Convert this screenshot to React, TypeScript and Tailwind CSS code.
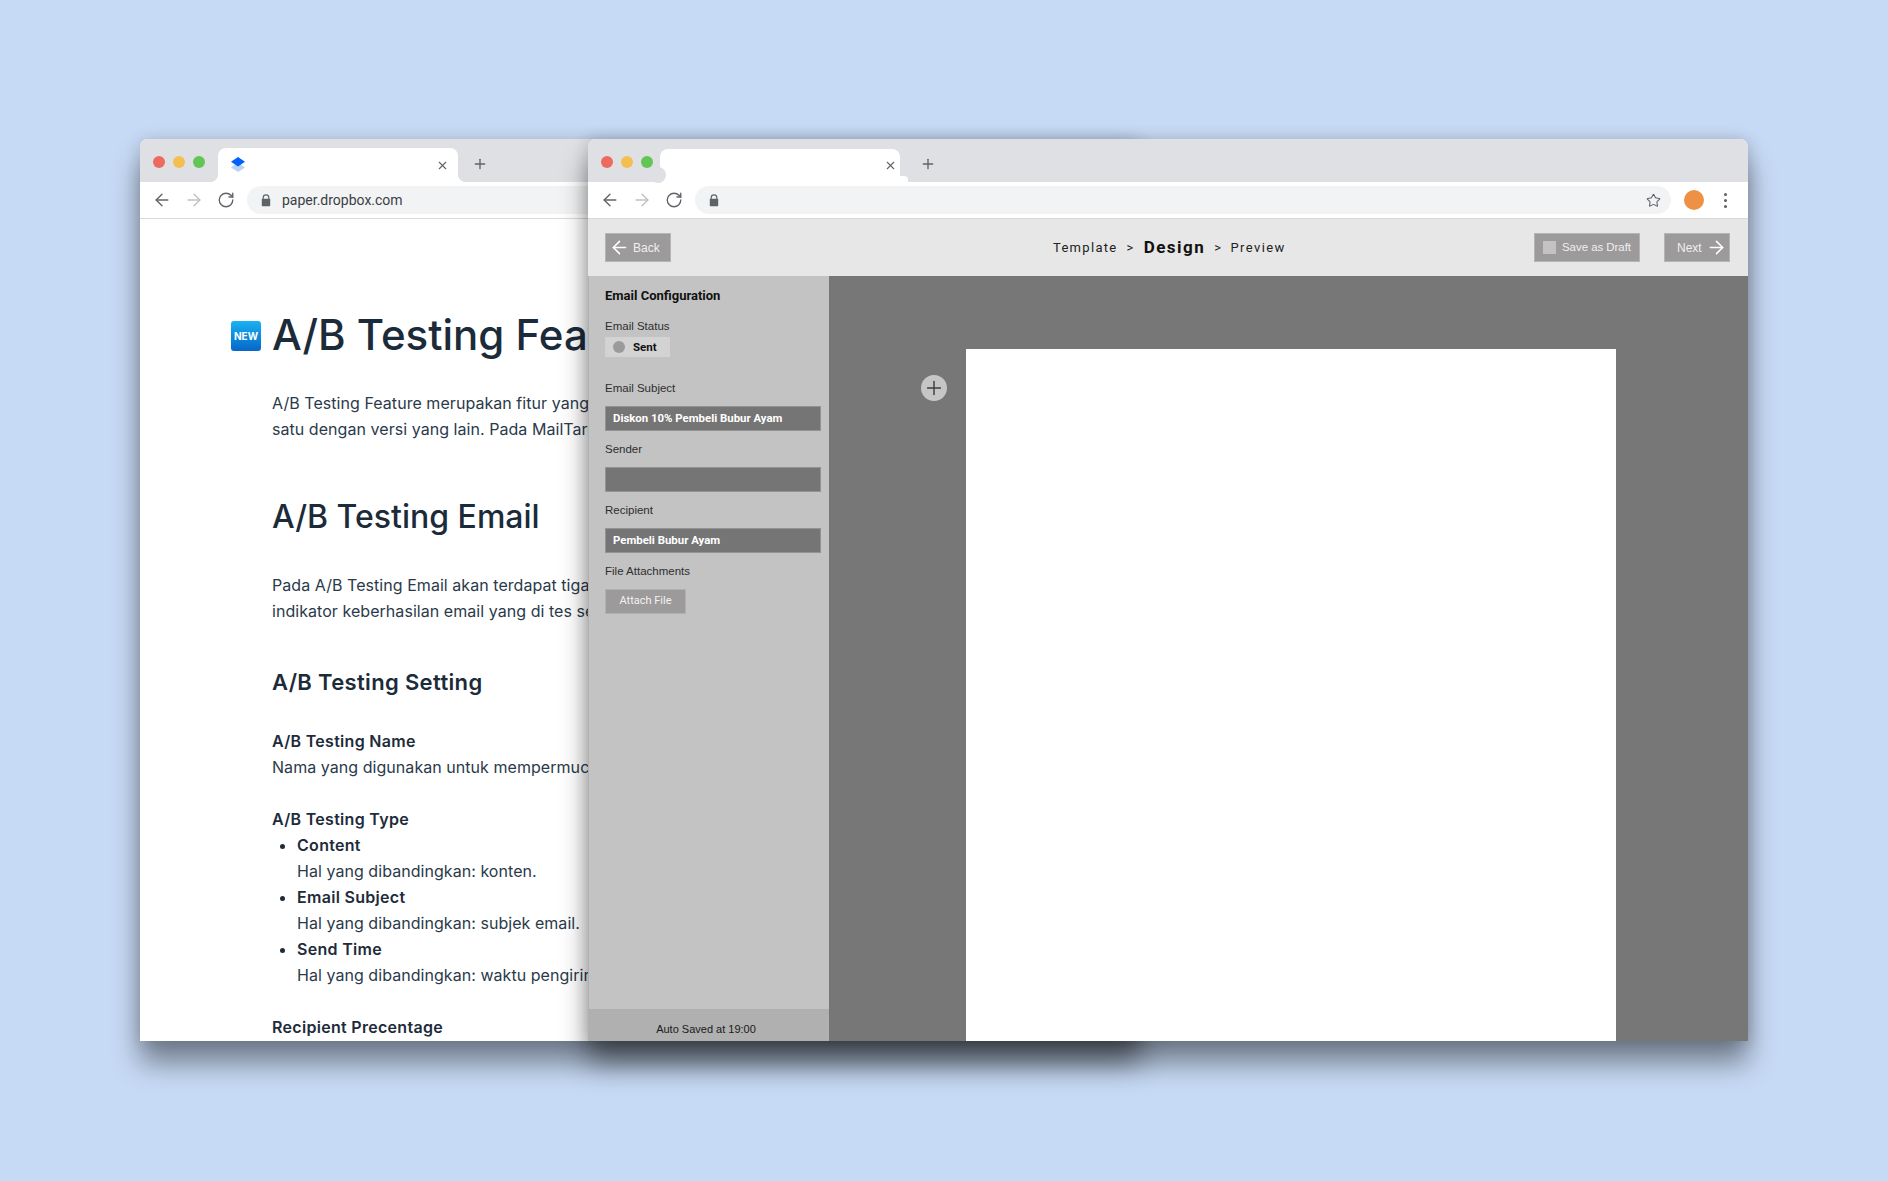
import React from "react";
import { ArrowLeft, ArrowRight, RotateCw, Star, X, Plus } from "lucide-react";

function Lights() {
  return (
    <div className="flex gap-2 pt-[17px] pl-[13px] w-[78px] shrink-0">
      <span className="w-3 h-3 rounded-full bg-[#ed6a5e]" />
      <span className="w-3 h-3 rounded-full bg-[#f5bf4f]" />
      <span className="w-3 h-3 rounded-full bg-[#62c554]" />
    </div>
  );
}

function LockIcon() {
  return (
    <svg width="10" height="13" viewBox="0 0 10 13" className="shrink-0">
      <path d="M2.2 5V3.6a2.8 2.8 0 0 1 5.6 0V5" fill="none" stroke="#5f6368" strokeWidth="1.2" />
      <rect x="0.8" y="4.8" width="8.4" height="7.4" rx="0.8" fill="#5f6368" />
    </svg>
  );
}

function NavButtons() {
  return (
    <div className="flex items-center gap-[12px] pl-[12px] shrink-0">
      <ArrowLeft size={20} strokeWidth={1.6} className="text-[#5f6368]" />
      <ArrowRight size={20} strokeWidth={1.6} className="text-[#bdc1c6]" />
      <RotateCw size={18} strokeWidth={1.8} className="text-[#5f6368] ml-[1px]" />
    </div>
  );
}

function Field({ label, value }: { label: string; value?: string }) {
  return (
    <div className="mt-[12px] first:mt-0">
      <div className="text-[11.5px] leading-[13px] text-[#2e2e2e] font-['Liberation_Sans',sans-serif]">{label}</div>
      <div className="mt-[11px] h-[25px] w-[216px] bg-[#757575] border border-[#939393] flex items-center pl-[7px] text-[11.4px] font-bold text-white font-['Roboto',sans-serif]">
        {value}
      </div>
    </div>
  );
}

const ROW = "text-[16px] leading-[26px] tracking-[0.05px] text-[#2b3a4a]";
const BOLD = "text-[16px] leading-[26px] tracking-[0.3px] font-semibold text-[#1e2b3a]";

function LeftWindow() {
  return (
    <div className="absolute left-[140px] top-[139px] w-[1000px] h-[902px] rounded-t-[8px] overflow-hidden flex flex-col bg-white shadow-[0_22px_28px_rgba(0,0,0,0.42),0_0_16px_rgba(0,0,0,0.14)] z-0">
      <div className="h-[43px] bg-[#dfe0e4] flex shrink-0">
        <Lights />
        <div className="relative mt-[9px] w-[240px] h-[34px] bg-white rounded-t-[8px] flex items-center pl-[13px] pr-[9px] justify-between">
          <span className="absolute left-[-8px] bottom-0 w-2 h-2 bg-[radial-gradient(circle_at_0_0,transparent_8px,#fff_8px)]" />
          <span className="absolute right-[-8px] bottom-0 w-2 h-2 bg-[radial-gradient(circle_at_100%_0,transparent_8px,#fff_8px)]" />
          <svg width="14" height="15" viewBox="0 0 14 15" className="-mt-[2px]">
            <path d="M7 5.5 14 10.5 7 15 0 10.5Z" fill="#b9d3f3" />
            <path d="M7 0 14 4.7 7 9.4 0 4.7Z" fill="#0061fe" />
          </svg>
          <X size={13} strokeWidth={2} className="text-[#5f6368]" />
        </div>
        <Plus size={16} strokeWidth={2} className="text-[#5f6368] ml-[14px] mt-[17px]" />
      </div>
      <div className="h-[37px] border-b border-[#d9d9d9] flex items-center shrink-0">
        <NavButtons />
        <div className="ml-[12px] flex-1 h-[28px] rounded-l-full bg-[#f1f3f4] flex items-center pl-[14px] gap-[11px]">
          <LockIcon />
          <span className="text-[14px] text-[#3c4043] font-['Roboto',sans-serif]">paper.dropbox.com</span>
        </div>
      </div>
      <div className="flex-1 overflow-hidden pl-[132px] font-['Inter',sans-serif] whitespace-nowrap">
        <div className="mt-[91px] flex items-center relative">
          <div className="absolute left-[-41px] top-[11px] w-[30px] h-[30px] rounded-[3px] bg-gradient-to-b from-[#1bb2f2] to-[#0a66c8] flex items-center justify-center text-[10px] font-bold text-white">NEW</div>
          <h1 className="text-[42px] leading-[50px] font-medium text-[#1c2b3a]">A/B Testing Feat</h1>
        </div>
        <p className={`mt-[30px] ${ROW}`}>A/B Testing Feature merupakan fitur yang</p>
        <p className={ROW}>satu dengan versi yang lain. Pada MailTarg</p>
        <h2 className="mt-[55px] text-[32px] leading-[40px] font-medium text-[#1c2b3a]">A/B Testing Email</h2>
        <p className={`mt-[35px] ${ROW}`}>Pada A/B Testing Email akan terdapat tiga</p>
        <p className={ROW}>indikator keberhasilan email yang di tes se</p>
        <h3 className="mt-[43px] text-[22px] leading-[30px] tracking-[0.34px] font-semibold text-[#1c2b3a]">A/B Testing Setting</h3>
        <p className={`mt-[31px] ${BOLD}`}>A/B Testing Name</p>
        <p className={ROW}>Nama yang digunakan untuk mempermuc</p>
        <p className={`mt-[26px] ${BOLD}`}>A/B Testing Type</p>
        <ul className="list-disc pl-[25px]">
          <li className={BOLD}>Content</li>
          <p className={ROW}>Hal yang dibandingkan: konten.</p>
          <li className={BOLD}>Email Subject</li>
          <p className={ROW}>Hal yang dibandingkan: subjek email.</p>
          <li className={BOLD}>Send Time</li>
          <p className={ROW}>Hal yang dibandingkan: waktu pengirir</p>
        </ul>
        <p className={`mt-[26px] ${BOLD}`}>Recipient Precentage</p>
      </div>
    </div>
  );
}

function FrontWindow() {
  return (
    <div className="absolute left-[588px] top-[139px] w-[1160px] h-[902px] rounded-t-[8px] overflow-hidden flex flex-col bg-white shadow-[0_22px_28px_rgba(0,0,0,0.42),0_0_16px_rgba(0,0,0,0.18)] z-10">
      <div className="h-[43px] bg-[#dfe0e4] flex shrink-0">
        <Lights />
        <div className="relative mt-[10px] -ml-[6px] w-[240px] h-[33px] bg-white rounded-t-[8px] flex items-center justify-end pr-[3px]">
          <span className="absolute left-[-10px] bottom-[-1px] w-4 h-4 rounded-full bg-[#dfe0e4]" />
          <span className="absolute right-[-8px] bottom-0 w-2 h-[6px] rounded-tr-[4px] bg-white" />
          <X size={13} strokeWidth={2} className="text-[#5f6368] -mt-[1px]" />
        </div>
        <Plus size={16} strokeWidth={2} className="text-[#5f6368] ml-[20px] mt-[17px]" />
      </div>
      <div className="h-[37px] border-b border-[#d9d9d9] flex items-center shrink-0">
        <NavButtons />
        <div className="ml-[12px] w-[976px] h-[28px] rounded-full bg-[#f1f3f4] flex items-center justify-between pl-[14px] pr-[10px]">
          <LockIcon />
          <Star size={15} strokeWidth={1.7} className="text-[#5f6368]" />
        </div>
        <span className="ml-[13px] w-5 h-5 rounded-full bg-[#ee9144]" />
        <div className="ml-[20px] flex flex-col gap-[3px]">
          <span className="w-[3px] h-[3px] rounded-full bg-[#5f6368]" />
          <span className="w-[3px] h-[3px] rounded-full bg-[#5f6368]" />
          <span className="w-[3px] h-[3px] rounded-full bg-[#5f6368]" />
        </div>
      </div>
      <div className="h-[57px] bg-[#e7e7e7] flex items-center pl-[17px] pr-[18px] shrink-0 font-['Roboto',sans-serif]">
        <div className="w-[66px] h-[29px] bg-[#9c9a9b] border border-[#b5b5b5] flex items-center pl-[3px] gap-[3px] text-white text-[12px] font-['Liberation_Sans',sans-serif]">
          <ArrowLeft size={21} strokeWidth={1.8} />
          <span className="text-[#f0f0f0]">Back</span>
        </div>
        <div className="ml-[382px] flex items-center text-[#222] text-[13px] tracking-[1.3px]">
          <span>Template</span>
          <span className="ml-[9px] text-[13px]">&gt;</span>
          <span className="ml-[9px] text-[17px] font-bold text-[#111] tracking-[1.5px]">Design</span>
          <span className="ml-[9px] text-[13px]">&gt;</span>
          <span className="ml-[8px] tracking-[1.4px]">Preview</span>
        </div>
        <div className="ml-auto w-[106px] h-[29px] bg-[#9c9a9b] border border-[#b5b5b5] flex items-center pl-[8px] gap-[6px] text-[11.4px] text-[#f0f0f0] font-['Liberation_Sans',sans-serif]">
          <span className="w-[13px] h-[13px] bg-[#c3c3c3]" />
          <span>Save as Draft</span>
        </div>
        <div className="ml-[24px] w-[66px] h-[29px] bg-[#9c9a9b] border border-[#b5b5b5] flex items-center pl-[12px] gap-[4px] text-[12px] text-[#f0f0f0] font-['Liberation_Sans',sans-serif]">
          <span>Next</span>
          <ArrowRight size={21} strokeWidth={1.8} className="text-white" />
        </div>
      </div>
      <div className="flex-1 flex min-h-0">
        <aside className="w-[241px] shrink-0 bg-[#c3c3c3] border-l border-[#b0b0b0] flex flex-col">
          <div className="flex-1 pl-[16px] pt-[12px]">
            <div className="text-[13px] leading-[15px] font-bold text-[#111] font-['Roboto',sans-serif]">Email Configuration</div>
            <div className="mt-[17px] text-[11.5px] leading-[13px] text-[#2e2e2e] font-['Liberation_Sans',sans-serif]">Email Status</div>
            <div className="mt-[4px] w-[65px] h-[20px] bg-[#d3d3d3] flex items-center pl-[8px] gap-[8px] text-[11.5px] leading-[13px] font-bold text-[#111] font-['Roboto',sans-serif]">
              <span className="w-3 h-3 rounded-full bg-[#9c9a9b]" />
              <span>Sent</span>
            </div>
            <div className="mt-[25px]">
              <Field label="Email Subject" value="Diskon 10% Pembeli Bubur Ayam" />
              <Field label="Sender" />
              <Field label="Recipient" value="Pembeli Bubur Ayam" />
              <div className="mt-[12px] text-[11.5px] leading-[13px] text-[#2e2e2e] font-['Liberation_Sans',sans-serif]">File Attachments</div>
              <div className="mt-[11px] w-[81px] h-[25px] bg-[#9c9a9b] border border-[#b0b0b0] flex items-center justify-center text-[11px] text-[#f2f2f2] font-['Roboto',sans-serif]">Attach File</div>
            </div>
          </div>
          <div className="h-[32px] bg-[#b0b0b0] flex items-end justify-center pb-[4px] pr-[6px] text-[11px] text-[#1a1a1a] font-['Liberation_Sans',sans-serif]">Auto Saved at 19:00</div>
        </aside>
        <main className="flex-1 bg-[#777777] flex pt-[73px] min-w-0">
          <div className="ml-[92px] mt-[26px] w-[26px] h-[26px] rounded-full bg-[#c6c6c6] flex items-center justify-center shrink-0">
            <Plus size={22} strokeWidth={1.6} className="text-[#3f3f3f]" />
          </div>
          <div className="ml-[19px] w-[650px] bg-white" />
        </main>
      </div>
    </div>
  );
}

export default function App() {
  return (
    <div className="relative w-[1888px] h-[1181px] overflow-hidden bg-[#c7daf5]">
      <LeftWindow />
      <FrontWindow />
    </div>
  );
}
